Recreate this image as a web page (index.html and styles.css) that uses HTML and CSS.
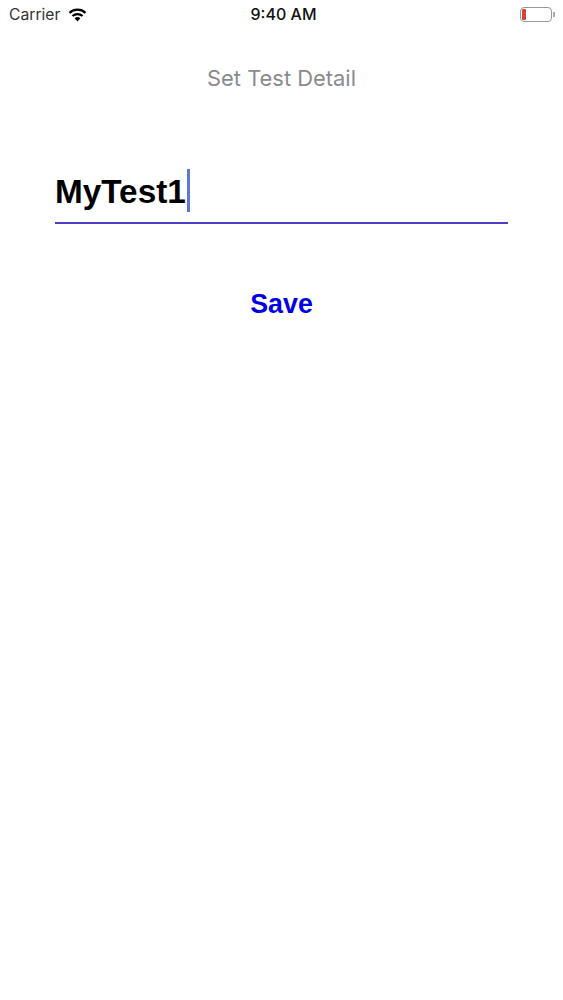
FILE: index.html
```html
<!DOCTYPE html>
<html lang="en">

<head>
    <meta charset="UTF-8">
    <meta name="viewport" content="width=device-width, initial-scale=1.0">
    <title>Set Test Detail</title>
    <link rel="stylesheet" href="styles.css">
</head>

<body>
    <div class="status-bar">
        <div class="status-left">
            <span class="carrier">Carrier</span>
            <svg class="wifi" width="19" height="14" viewBox="0 0 20 15">
                <path d="M10 14.5 L6.9 11 A4.6 4.6 0 0 1 13.1 11 Z" fill="#000" />
                <path d="M4.6 8.6 A8 8 0 0 1 15.4 8.6" fill="none" stroke="#000" stroke-width="2.4" />
                <path d="M1.4 5.2 A12.6 12.6 0 0 1 18.6 5.2" fill="none" stroke="#000" stroke-width="2.4" />
            </svg>
        </div>
        <span class="clock">9:40 AM</span>
        <div class="battery">
            <div class="battery-body">
                <div class="battery-level"></div>
            </div>
            <div class="battery-cap"></div>
        </div>
    </div>

    <h1 class="nav-title">Set Test Detail</h1>

    <div class="form">
        <div class="name-field">
            <span class="name-value">MyTest1</span>
            <span class="caret"></span>
        </div>
        <button class="save-btn">Save</button>
    </div>
</body>

</html>
```

FILE: styles.css
```css
body {
    font-family: 'Liberation Sans', Arial, sans-serif;
    background: #fff;
    margin: 0;
    height: 1000px;
    overflow: hidden;
}

.status-bar {
    display: grid;
    grid-template-columns: 1fr auto 1fr;
    align-items: center;
    height: 29px;
    padding: 0 8px 0 9px;
}

.status-left {
    display: flex;
    align-items: center;
    gap: 8px;
}

.carrier {
    font-family: 'Inter', 'Liberation Sans', sans-serif;
    font-size: 15.7px;
    color: #333;
}

.clock {
    font-family: 'Inter', 'Liberation Sans', sans-serif;
    font-size: 16px;
    font-weight: 500;
    color: #111;
    margin: 0 0 2px 3px;
}

.battery {
    display: flex;
    align-items: center;
    justify-content: flex-end;
}

.battery-body {
    width: 32px;
    height: 15px;
    box-sizing: border-box;
    border: 1px solid #999;
    border-radius: 4px;
    padding: 1px;
}

.battery-level {
    width: 4px;
    height: 100%;
    background: #d9403c;
    border-radius: 1px;
}

.battery-cap {
    width: 2px;
    height: 5px;
    margin-left: 1px;
    background: #aaa;
}

.nav-title {
    font-family: 'Inter', 'Liberation Sans', sans-serif;
    font-size: 21.9px;
    font-weight: 400;
    line-height: 26px;
    color: #8a8a8e;
    text-align: center;
    margin: 36px 0 0;
}

.form {
    display: flex;
    flex-direction: column;
    padding: 0 55px;
}

.name-field {
    display: flex;
    align-items: center;
    height: 54px;
    margin-top: 72px;
    border-bottom: 2px solid #4a3fc4;
    padding-bottom: 5px;
    box-sizing: content-box;
}

.name-value {
    font-size: 33.3px;
    font-weight: 700;
    color: #000;
    margin-top: 3px;
}

.caret {
    width: 3px;
    height: 43px;
    margin-left: 1px;
    background: #5f78d6;
}

.save-btn {
    align-self: center;
    font-family: inherit;
    font-size: 26.8px;
    font-weight: 700;
    color: #0000e6;
    background: none;
    border: 0;
    padding: 0;
    margin-top: 65px;
}
```
